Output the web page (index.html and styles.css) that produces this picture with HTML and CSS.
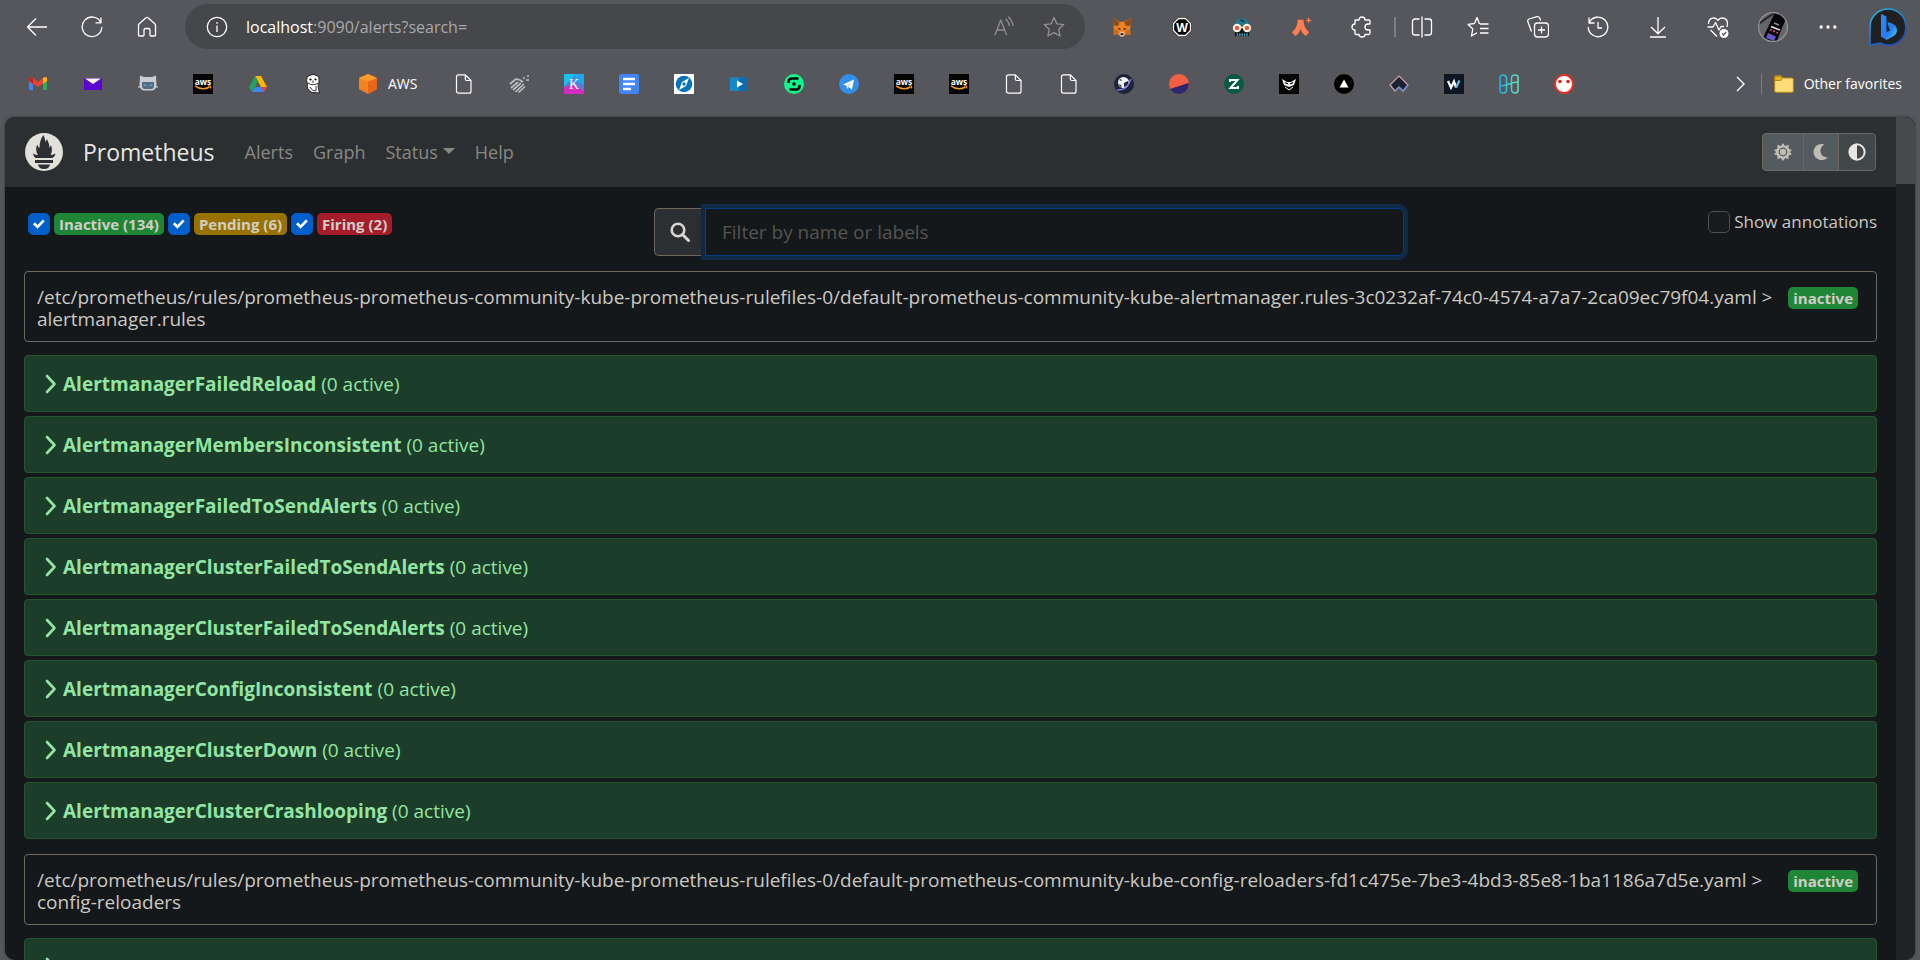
FILE: index.html
```html
<!DOCTYPE html>
<html lang="en">
<head>
<meta charset="utf-8">
<title>Prometheus Time Series Collection and Processing Server</title>
<meta name="viewport" content="width=device-width, initial-scale=1">
<link rel="stylesheet" href="styles.css">
</head>
<body>
<svg class="defs" aria-hidden="true">
  <symbol id="file" viewBox="0 0 20 20"><path d="M4.500 .8H11.300L17 6.500V17.200Q17 19.200 15 19.200H4.500Q2.500 19.200 2.500 17.200V2.800Q2.500 .8 4.500 .8Z M11.300 .8V5Q11.300 6.500 12.800 6.500H17" fill="none" stroke="#fff" stroke-width="1.200"/></symbol>
  <symbol id="aws" viewBox="0 0 20 20"><rect width="20" height="20" fill="#050505"/><text x="10" y="10.500" text-anchor="middle" font-family="Open Sans, sans-serif" font-weight="700" font-size="8.500" fill="#fff">aws</text><path d="M2 11.800Q9 17 16.500 13" fill="none" stroke="#f79a1f" stroke-width="1.500"/><path d="M15 12Q18.500 11 17.500 14.500" fill="none" stroke="#f79a1f" stroke-width="1.200"/></symbol>
  <symbol id="chevron" viewBox="0 0 12 20"><path d="M2 2 9.500 10 2 18" fill="none" stroke="currentColor" stroke-width="2.600" stroke-linecap="round" stroke-linejoin="round"/></symbol>
</svg>

<header class="browser">
  <div class="toolbar">
    <button class="tool tool-nav" aria-label="Back"><svg viewBox="0 0 22 22"><path d="M21 11H1.500M10 2.500 1.500 11 10 19.500"/></svg></button>
    <button class="tool tool-nav" aria-label="Refresh"><svg viewBox="0 0 22 22"><path d="M19.800 6.500A9.800 9.800 0 1 0 20.800 11M20 1.500V6.800H14.500"/></svg></button>
    <button class="tool tool-nav" aria-label="Home"><svg viewBox="0 0 22 22"><path d="M2.500 9.500Q2.500 8.500 3.200 7.800L10 1.800Q11 1 12 1.800L18.800 7.800Q19.500 8.500 19.500 9.500V19Q19.500 20 18.500 20H15Q14 20 14 19V14Q14 12.500 12.500 12.500H9.500Q8 12.500 8 14V19Q8 20 7 20H3.500Q2.500 20 2.500 19Z"/></svg></button>
    <div class="address">
      <svg class="address-info" viewBox="0 0 22 22"><circle cx="11" cy="11" r="9.700"/><path d="M11 9.500V16M11 6V7.800"/></svg>
      <span class="url"><b>localhost</b>:9090/alerts?search=</span>
      <button class="address-btn" aria-label="Read aloud"><svg viewBox="0 0 22 22"><path d="M2 19 7.800 4 13.600 19M4 14H11.600M12.500 3Q15.800 5.500 16.500 10M15 .8Q19.300 4 20 10"/></svg></button>
      <button class="address-btn" aria-label="Add to favorites"><svg viewBox="0 0 22 22"><path d="M11 1.500 13.800 7.800 20.800 8.600 15.700 13.300 17.100 20 11 16.600 4.900 20 6.300 13.300 1.200 8.600 8.200 7.800Z"/></svg></button>
    </div>
    <button class="tool tool-ext" aria-label="MetaMask"><svg class="art" viewBox="1 0 20 21"><path d="M1.500 1 8.500 5H13.500L20.500 1 20 9 19 16 20 18.500 15 18 12.500 20.500H9.500L7 18 2 18.500 3 16 2 9Z" fill="#ef821f"/><path d="M1.500 1 8.500 5.500 7 9.500 2 9ZM20.500 1 13.500 5.500 15 9.500 20 9Z" fill="#8d4b1d"/><path d="M2 14 7 13.500 7 18 2 19ZM20 14 15 13.500 15 18 20 19Z" fill="#c96b20"/><path d="M6 12 9 11.500 9.500 14ZM16 12 13 11.500 12.500 14Z" fill="#3b2b24"/><path d="M8 18 9.500 15.500H12.500L14 18 12.500 20.500H9.500Z" fill="#ddc7b4"/><path d="M9.500 17H12.500V19H9.500Z" fill="#211d1c"/></svg></button>
    <button class="tool tool-ext" aria-label="Wallet"><svg class="art" viewBox="1 1 20 20"><path d="M7 1.500H15L20.500 7V15L15 20.500H7L1.500 15V7Z" fill="#070707"/><path d="M7.500 2.500H14.500L19.500 7.500V14.500L14.500 19.500H7.500L2.500 14.500V7.500Z" fill="none" stroke="#fff"/><text x="11" y="15.500" text-anchor="middle" class="letter letter-w">W</text></svg></button>
    <button class="tool tool-ext" aria-label="Robot"><svg class="art" viewBox="1 0 20 21"><path d="M3 10Q3 1 11 1T19 10V12H3Z" fill="#287489"/><path d="M3.500 11H18.500V20H3.500Z" fill="#0e181d"/><circle cx="5.800" cy="11.500" r="3.400" fill="#e95a43" stroke="#fff4dd" stroke-width="2"/><circle cx="16.200" cy="11.500" r="3.400" fill="#e95a43" stroke="#fff4dd" stroke-width="2"/><path d="M9 11H13" stroke="#fff4dd" stroke-width="1.500"/><path d="M5.500 18.500H17" stroke="#56a9bc" stroke-width="2.500" stroke-dasharray="1.500 1"/><path d="M9 3 14 5" stroke="#123b48" stroke-width="1.500"/></svg></button>
    <button class="tool tool-ext" aria-label="Argent"><svg class="art" viewBox="1 0 21 21"><path d="M7 3H13Q13 11 19 16L15.500 20Q11 17 10 12Q9 17 4.500 20L1 16Q7 11 7 3Z" fill="#ff7d4e"/><path d="M18.500 0 19.400 2.600 22 3.500 19.400 4.400 18.500 7 17.600 4.400 15 3.500 17.600 2.600Z" fill="#ff7d4e"/></svg></button>
    <button class="tool tool-ext" aria-label="Extensions"><svg viewBox="0 0 22 22"><path d="M4 4H8Q8 1 11 1T14 4H18Q19 4 19 5V8H17Q14 8 14 11T17 14H19V17Q19 18.500 17.500 18.500H14Q14 21 11 21T8 18.500H5Q4 18.500 4 17.500V14Q1 14 1 11T4 8Z"/></svg></button>
    <span class="divider"></span>
    <button class="tool tool-split" aria-label="Split screen"><svg viewBox="0 0 22 22"><path d="M8.500 3H4Q1.500 3 1.500 5.500V16.500Q1.500 19 4 19H8.500M13.500 3H18Q20.500 3 20.500 5.500V16.500Q20.500 19 18 19H13.500M11 .5V21.500"/></svg></button>
    <button class="tool" aria-label="Favorites"><svg viewBox="0 0 22 22"><path d="M12.500 8 10 1.500 7.400 7.500 1 8.300 5.800 13 4.500 20 10 16.800M13 8H21.500M13 12.500H21.500M13 17H21.500"/></svg></button>
    <button class="tool" aria-label="Collections"><svg viewBox="0 0 22 22"><rect x="7.500" y="7" width="14" height="14" rx="3"/><path d="M14.500 10.500V17.500M11 14H18M4.500 15.500 .8 5.500Q.3 3.800 2 3L10 .7Q12 .5 12.800 2L13.600 4.500"/></svg></button>
    <button class="tool" aria-label="History"><svg viewBox="0 0 22 22"><path d="M2 7A9.800 9.800 0 1 1 1.200 11M2 1.500V7H7.500M11 6V12H15"/></svg></button>
    <button class="tool" aria-label="Downloads"><svg viewBox="0 0 22 22"><path d="M11 1V17.500M4 11 11 17.800 18 11M3 21H19"/></svg></button>
    <button class="tool" aria-label="Browser essentials"><svg viewBox="0 0 22 22"><path d="M1.500 8Q1.500 2 7 2Q9.500 2 11 4.500Q12.500 2 15 2Q20.500 2 20.500 8L20 11M.5 11H6L8.500 6.500 12 14 14 10.500H17M3.500 14 10 20.500"/><circle cx="17" cy="17.500" r="4.500" fill="#fff" stroke="none"/><path d="m15 17.500 1.500 1.500 2.700-3" stroke="#55565b"/></svg></button>
    <button class="tool tool-avatar" aria-label="Profile"><svg class="avatar" viewBox="0 0 30 30"><defs><clipPath id="round"><circle cx="15" cy="15" r="15"/></clipPath></defs><g clip-path="url(#round)"><rect width="30" height="30" fill="#66666a"/><path d="M-1 13 16 1" stroke="#242427" stroke-width="2"/><path d="M17 0 29 4 18 31 5 26Z" fill="#060609"/><path d="M16 11 21 13" stroke="#8a8a92" stroke-width="1.500"/><path d="M13 14.500 22 18" stroke="#f2e4ee" stroke-width="1.500"/><path d="M12 17.500 20 21" stroke="#e0457c" stroke-width="1.800" stroke-dasharray="2 1.500"/><path d="M10 21 18 24.500 16 29 8 26Z" fill="#6657c9"/></g><circle cx="15" cy="15" r="14.500" fill="none" stroke="#939396"/></svg></button>
    <button class="tool" aria-label="Settings and more"><svg viewBox="0 0 22 22"><g fill="#fff" stroke="none"><circle cx="4.200" cy="11" r="1.700"/><circle cx="11" cy="11" r="1.700"/><circle cx="17.800" cy="11" r="1.700"/></g></svg></button>
    <button class="tool" aria-label="Bing"><svg class="bing" viewBox="0 0 40 40"><defs><linearGradient id="ring" x2="0.600" y2="1"><stop stop-color="#25c5ee"/><stop offset="1" stop-color="#1747c8"/></linearGradient><linearGradient id="bee" x1="0" y1="0" x2="1" y2="1"><stop stop-color="#2d8df5"/><stop offset=".6" stop-color="#267af0"/><stop offset="1" stop-color="#48dde2"/></linearGradient></defs><path d="M2 38V20A18 18 0 1 1 20 38Q16 38 12 36Z" fill="#202023" stroke="url(#ring)" stroke-width="1.600"/><path d="M13 7 18.500 9.500V25L22 23.500 20 18 19.500 15Q29 17 29 23Q29 27 25 29.500L18.500 33 13 29.500Z" fill="url(#bee)"/></svg></button>
  </div>

  <nav class="bookmarks" aria-label="Favorites bar">
    <a href="#" aria-label="Gmail"><svg viewBox="0 0 20 20"><path d="M1 4H5V16H2Q1 16 1 15Z" fill="#4285f4"/><path d="M15 4H19V15Q19 16 18 16H15Z" fill="#34a853"/><path d="M1 5Q1 2 4 3L10 8 16 3Q19 2 19 5V7L10 13 1 7Z" fill="#ea4335"/><path d="M15 4 17 3Q19 3 19 5V7L15 10Z" fill="#fbbc04"/><path d="M1 5Q1 3 3 3L5 4V10L1 7Z" fill="#c5221f"/></svg></a>
    <a href="#" aria-label="Mail"><svg viewBox="0 0 20 20"><path d="M1 4H19V16H1Z" fill="#5b06d2"/><path d="M2 4.500H18L10 10Z" fill="#fff"/></svg></a>
    <a href="#" aria-label="Cat"><svg viewBox="0 0 20 20"><path d="M2 1.500 6 3H14L18 1.500 18.500 12Q17 16.500 14 16.500H6Q3 16.500 1.500 12Z" fill="#c9ccd4"/><path d="M4 8H16V12Q16 15 13 15H7Q4 15 4 12Z" fill="#566a80"/><path d="M6 12Q7.200 9.500 8.400 12M11.600 12Q12.800 9.500 14 12" fill="none" stroke="#4cb6e6" stroke-width="1.200"/><path d="M0 13H3M17 13H20" stroke="#dadbe0"/></svg></a>
    <a href="#" aria-label="AWS console"><svg><use href="#aws"/></svg></a>
    <a href="#" aria-label="Drive"><svg viewBox="0 0 20 20"><path d="M7 2H13L19 13H13Z" fill="#fbb904"/><path d="M7 2 10 7 4 18 1 13Z" fill="#22a45d"/><path d="M4 18 7 13H19L16 18Z" fill="#4285f4"/><path d="M13 13H19L16 18Z" fill="#ea4335"/></svg></a>
    <a href="#" aria-label="Owl"><svg viewBox="0 0 20 20"><path d="M4 3Q10-2 16 3L16 9Q14 11 16.500 19L9 18.500Q3 15 4.500 10Q3 7 4 3Z" fill="#fff" stroke="#202124"/><circle cx="7.500" cy="5.500" r="1.100"/><circle cx="12.500" cy="5.500" r="1.100"/><path d="M10 6.500V9M5 9Q10 12.500 15.500 9M7 13Q9 17.500 13 17V12" fill="none" stroke="#333"/></svg></a>
    <a class="named" href="#"><svg viewBox="0 0 20 20"><path d="M10 0 19 4V15L10 20 1 15V4Z" fill="#f58220"/><path d="M10 0 19 4 10 8 1 4Z" fill="#fa9b2b"/><path d="M10 8 19 4V15L10 20Z" fill="#e8651a"/></svg><span>AWS</span></a>
    <a href="#" aria-label="Page"><svg><use href="#file"/></svg></a>
    <a href="#" aria-label="Handshake"><svg viewBox="0 0 20 20"><path d="M1 10 7 5 11 6 14 8M2 14 9 8M4 16 12 9M6.500 18 15 10M9.500 18.500 16 12.500" fill="none" stroke="#b9c0bf" stroke-width="1.700"/><path d="M14 4H16M18 2H20M17 6H20" stroke="#b9c0bf" stroke-width="1.500"/></svg></a>
    <a href="#" aria-label="K"><svg viewBox="0 0 20 20"><path d="M0 0H20V20H0Z" fill="#5c78d8"/><path d="M0 0H12L0 13Z" fill="#13c2ef"/><path d="M12 0H20V11L10 7Z" fill="#1ea7ea"/><path d="M0 13 10 11 20 17V20H0Z" fill="#d72bc0"/><text x="10" y="15" text-anchor="middle" class="letter letter-k">K</text></svg></a>
    <a href="#" aria-label="Docs"><svg viewBox="0 0 20 20"><rect width="20" height="20" rx="2" fill="#4285f4"/><path d="M4 5H16M4 10H16M4 15H12" stroke="#fff" stroke-width="2.300"/></svg></a>
    <a href="#" aria-label="Compass"><svg viewBox="0 0 20 20"><path d="M0 0H20V20H0Z" fill="#fff"/><circle cx="10" cy="10" r="8.300" fill="#0873b9"/><path d="M15 4 12 12 5 16 8 8Z" fill="#fff"/><circle cx="10" cy="10" r="1.700" fill="#0873b9"/></svg></a>
    <a href="#" aria-label="Video"><svg viewBox="0 0 20 20"><path d="M1 3.500H19V17H1Z" fill="#1689c4"/><path d="M10 3.500H19V17H10Z" fill="#106bac"/><path d="M8 6.500 14 10 8 13.500Z" fill="#fff"/></svg></a>
    <a href="#" aria-label="Green S"><svg viewBox="0 0 20 20"><circle cx="10" cy="10" r="10" fill="#10f58b"/><path d="M14.500 4.500H8Q4.500 4.500 4.500 8V9M5.500 15.500H12Q15.500 15.500 15.500 12V11" fill="none" stroke="#05080b" stroke-width="2.600"/><circle cx="10" cy="10" r="1.800" fill="#05080b"/></svg></a>
    <a href="#" aria-label="Telegram"><svg viewBox="0 0 20 20"><circle cx="10" cy="10" r="10" fill="#328fea"/><path d="M4 10.500 15 5.500 13 15.500 9.500 13 8 15 7.500 11.800Z" fill="#fff"/><path d="m8 12 5-4-4 5Z" fill="#a6c9ec"/></svg></a>
    <a href="#" aria-label="AWS docs"><svg><use href="#aws"/></svg></a>
    <a href="#" aria-label="AWS training"><svg><use href="#aws"/></svg></a>
    <a href="#" aria-label="Page"><svg><use href="#file"/></svg></a>
    <a href="#" aria-label="Page"><svg><use href="#file"/></svg></a>
    <a href="#" aria-label="Globe"><svg viewBox="0 0 20 20"><circle cx="10" cy="10" r="10" fill="#1b2538"/><circle cx="9.500" cy="8.500" r="5.500" fill="#f2f5fa"/><path d="M5 6 7 5 8 7ZM10 9 14 7 15 11 10 13ZM4 10 7 11 8 14Z" fill="#1b2538"/><path d="M3 16Q13 17 17 5" fill="none" stroke="#8379e8" stroke-width="1.500"/></svg></a>
    <a href="#" aria-label="Two-tone circle"><svg viewBox="0 0 20 20"><circle cx="10" cy="10" r="10" fill="#f35f43"/><path d="M1 15 19.500 9Q20.500 13 17 17Q13.500 20.500 9 20Q4 19.500 1 15Z" fill="#2d2770"/></svg></a>
    <a href="#" aria-label="Z"><svg viewBox="0 0 20 20"><circle cx="10" cy="10" r="10" fill="#075b43"/><path d="M6 6H13.500L6.500 14H14M6 5V8M14 12V15" fill="none" stroke="#fff" stroke-width="2"/></svg></a>
    <a href="#" aria-label="Owl mask"><svg viewBox="0 0 20 20"><path d="M0 0H20V20H0Z" fill="#050505"/><path d="M3 5 8 8H12L17 5 15 11 10 13 5 11Z" fill="#fff"/><path d="M6 8.500 9 10M14 8.500 11 10" stroke="#050505" stroke-width="1.300"/><path d="M6 13 10 16 14 13" fill="none" stroke="#fff"/></svg></a>
    <a href="#" aria-label="Triangle"><svg viewBox="0 0 20 20"><circle cx="10" cy="10" r="10"/><path d="M10 5.500 14.500 13.500H5.500Z" fill="#fff"/></svg></a>
    <a href="#" aria-label="Arrow"><svg viewBox="0 0 20 20"><path d="M10 2 19 11 14 17 10 13 6 17 1 11Z" fill="#1d2233" stroke="#c5a7a0" stroke-width="1.200"/><path d="M19 11 14 17 10 13 6 17" fill="none" stroke="#6f8fd4" stroke-width="1.200"/></svg></a>
    <a href="#" aria-label="W"><svg viewBox="0 0 20 20"><path d="M0 0H20V20H0Z" fill="#0e1624"/><path d="M4 7 7 13.500 10 7.500 12 13.500" fill="none" stroke="#fff" stroke-width="2.300"/><path d="M12 13.500 15.500 6.500" stroke="#69b8e8" stroke-width="2.300"/></svg></a>
    <a href="#" aria-label="Harmony"><svg viewBox="0 0 20 20"><defs><linearGradient id="harm" x2="1"><stop stop-color="#1bb4e8"/><stop offset="1" stop-color="#5fe5b5"/></linearGradient></defs><path d="M1 4Q1 1 4 1T7.500 4V16Q7.500 19 4 19T1 16ZM12.500 4Q12.500 1 16 1T19 4V16Q19 19 16 19T12.500 16ZM1 12Q5 12 10 10T19 8" fill="none" stroke="url(#harm)" stroke-width="1.500"/></svg></a>
    <a href="#" aria-label="Face"><svg viewBox="0 0 20 20"><circle cx="10" cy="10" r="9" fill="#fff" stroke="#f02e1c" stroke-width="2"/><circle cx="6" cy="7.500" r="1.800" fill="#e91d14"/><circle cx="14" cy="7.500" r="1.800" fill="#e91d14"/></svg></a>
    <button class="more" aria-label="More favorites"><svg viewBox="0 0 20 20"><path d="M7 3 14 10 7 17" fill="none" stroke="#fff" stroke-width="1.400"/></svg></button>
    <span class="divider"></span>
    <a class="other" href="#"><svg viewBox="0 0 20 20"><path d="M.7 3Q.7 1.700 2 1.700H7L9 4H18Q19.300 4 19.300 5.300V17Q19.300 18.300 18 18.300H2Q.7 18.300 .7 17Z" fill="#ffdc79" stroke="#b98a10"/><path d="M1 2.500H7L8 4.500 7 6.500H1Z" fill="#e9b51f" stroke="#b98a10"/></svg><span>Other favorites</span></a>
  </nav>
</header>

<div class="viewport">
  <div class="page">
    <nav class="navbar">
      <svg class="logo" viewBox="0 0 38 38"><circle cx="19" cy="19" r="19" fill="#e3dfd9"/><path d="M8 20.500Q11 22 13 22Q10 18 12 11.500Q13 14 14.500 15Q14.500 7 18.500 2Q20 5 20.500 9L22 6Q24.500 11 24.500 15L26 12Q28 18 25.500 22Q27 22 30.500 20.500Q30 24 27.500 25H10.500Q8.500 24 8 20.500Z" fill="#2b2f32"/><path d="M10 27H28V30H10ZM13 31.500H25Q24 36 19 36T13 31.500Z" fill="#2b2f32"/></svg>
      <a class="brand" href="#">Prometheus</a>
      <a class="nav-link" href="#">Alerts</a>
      <a class="nav-link" href="#">Graph</a>
      <a class="nav-link caret" href="#">Status</a>
      <a class="nav-link" href="#">Help</a>
      <div class="themes" role="group" aria-label="Theme">
        <button aria-label="Light theme"><svg viewBox="0 0 20 20"><path d="M10 0 12.200 3.200 16.200 2 16.200 6.200 20 8 17.500 10 20 12.500 16.200 13.800 16.200 18 12.500 16.800 10 20 7.500 16.800 3.800 18 3.800 13.800 0 12.500 2.500 10 0 8 3.800 6.200 3.800 2 7.800 3.200Z" fill="currentColor"/><circle cx="10" cy="10" r="4.200" fill="none" stroke="#545b5f" stroke-width="1.400"/></svg></button>
        <button aria-label="Dark theme"><svg viewBox="0 0 20 20"><path d="M13.500 1.500A9 9 0 1 0 17.500 16Q10.500 16 9.500 10Q9 5 13.500 1.500Z" fill="currentColor"/></svg></button>
        <button class="active" aria-label="Browser theme"><svg viewBox="0 0 20 20"><circle cx="10" cy="10" r="8.500" fill="none" stroke="currentColor" stroke-width="2.200"/><path d="M10 1.500V18.500A8.500 8.500 0 0 1 10 1.500Z" fill="currentColor"/></svg></button>
      </div>
    </nav>

    <main class="content">
      <form class="filters">
        <div class="states">
          <label><input type="checkbox" checked><span class="badge inactive">Inactive (134)</span></label>
          <label><input type="checkbox" checked><span class="badge pending">Pending (6)</span></label>
          <label><input type="checkbox" checked><span class="badge firing">Firing (2)</span></label>
        </div>
        <div class="search">
          <span class="search-icon"><svg viewBox="0 0 20 20"><circle cx="8" cy="8" r="6.300" fill="none" stroke="currentColor" stroke-width="2.600"/><path d="M12.500 12.500 18.500 18.500" stroke="currentColor" stroke-width="3" stroke-linecap="round"/></svg></span>
          <input type="text" aria-label="Filter by name or labels" placeholder="Filter by name or labels">
        </div>
        <label class="annotations"><input type="checkbox"><span>Show annotations</span></label>
      </form>

      <section class="group">
        <div class="rule-file"><span class="path">/etc/prometheus/rules/prometheus-prometheus-community-kube-prometheus-rulefiles-0/default-prometheus-community-kube-alertmanager.rules-3c0232af-74c0-4574-a7a7-2ca09ec79f04.yaml &gt; alertmanager.rules</span><span class="badge inactive">inactive</span></div>
        <button class="alert"><svg><use href="#chevron"/></svg><span><strong>AlertmanagerFailedReload</strong> (0 active)</span></button>
        <button class="alert"><svg><use href="#chevron"/></svg><span><strong>AlertmanagerMembersInconsistent</strong> (0 active)</span></button>
        <button class="alert"><svg><use href="#chevron"/></svg><span><strong>AlertmanagerFailedToSendAlerts</strong> (0 active)</span></button>
        <button class="alert"><svg><use href="#chevron"/></svg><span><strong>AlertmanagerClusterFailedToSendAlerts</strong> (0 active)</span></button>
        <button class="alert"><svg><use href="#chevron"/></svg><span><strong>AlertmanagerClusterFailedToSendAlerts</strong> (0 active)</span></button>
        <button class="alert"><svg><use href="#chevron"/></svg><span><strong>AlertmanagerConfigInconsistent</strong> (0 active)</span></button>
        <button class="alert"><svg><use href="#chevron"/></svg><span><strong>AlertmanagerClusterDown</strong> (0 active)</span></button>
        <button class="alert"><svg><use href="#chevron"/></svg><span><strong>AlertmanagerClusterCrashlooping</strong> (0 active)</span></button>
      </section>
      <section class="group">
        <div class="rule-file"><span class="path">/etc/prometheus/rules/prometheus-prometheus-community-kube-prometheus-rulefiles-0/default-prometheus-community-kube-config-reloaders-fd1c475e-7be3-4bd3-85e8-1ba1186a7d5e.yaml &gt; config-reloaders</span><span class="badge inactive">inactive</span></div>
        <button class="alert" aria-label="Expand alert"><svg><use href="#chevron"/></svg></button>
      </section>
    </main>
  </div>
  <div class="scrollbar"><div class="thumb"></div></div>
</div>
</body>
</html>
```

FILE: styles.css
```css
* { box-sizing: border-box; }

body {
  margin: 0;
  height: 100vh;
  display: flex;
  flex-direction: column;
  overflow: hidden;
  background: #56575c;
  color: #cbc8c2;
  font-family: "Open Sans", "Noto Sans", sans-serif;
  font-size: 19px;
}

button, input { font: inherit; color: inherit; }
button { border: 0; padding: 0; background: none; }
a { color: inherit; text-decoration: none; }
svg { display: block; flex: none; }
.defs { display: none; }

/* Browser toolbar */
.browser { flex: none; color: #fff; }

.toolbar {
  display: flex;
  align-items: center;
  height: 53px;
  padding: 0 2px 0 9px;
}

.tool {
  width: 60px;
  height: 44px;
  display: flex;
  align-items: center;
  justify-content: center;
  flex: none;
}

.tool svg, .address svg {
  width: 22px;
  height: 22px;
  fill: none;
  stroke: #fff;
  stroke-width: 1.3;
  stroke-linejoin: round;
}
.tool .art { width: 20px; height: 20px; stroke: none; }
.tool .avatar { width: 30px; height: 30px; stroke: none; }
.tool .bing { width: 40px; height: 40px; stroke: none; }
.tool-nav { width: 55px; }
.tool-split { width: 52px; }
.tool-avatar { width: 50px; }

.letter { fill: #fff; text-anchor: middle; }
.letter-w { font-family: "Open Sans", sans-serif; font-size: 12px; font-weight: 700; }
.letter-k { font-family: "Liberation Serif", serif; font-size: 14px; }

.address {
  flex: 1;
  min-width: 0;
  height: 45px;
  margin: 0 7px 0 11px;
  padding: 0 20px 0 21px;
  border-radius: 23px;
  display: flex;
  align-items: center;
  background: #46474a;
}
.address-info { margin-right: 18px; }
.url { flex: 1; font-size: 16px; color: #a9a9ab; }
.url b { font-weight: 400; color: #fff; }
.address-btn { margin-left: 28px; }
.address .address-btn svg { stroke: #919194; }

.divider { width: 2px; height: 20px; flex: none; background: #7d7e82; }
.toolbar .divider { margin-left: 2px; }

.bookmarks {
  display: flex;
  align-items: center;
  gap: 35px;
  height: 64px;
  padding: 0 18px 3px 28px;
  font-size: 14px;
}
.bookmarks a { display: flex; align-items: center; gap: 10px; white-space: nowrap; }
.bookmarks svg { width: 20px; height: 20px; }
.bookmarks .named { padding-right: 2px; }
.bookmarks .more { margin-left: auto; }
.bookmarks .divider { width: 1px; margin: 0 -23px 0 -24px; }

/* Page window */
.viewport {
  flex: 1;
  min-height: 0;
  margin: 0 5px;
  display: flex;
  border-radius: 10px;
  overflow: hidden;
  background: #14181b;
  box-shadow: 0 0 3px #333;
}
.page { flex: 1; min-width: 0; overflow: hidden; }
.scrollbar { width: 19px; background: #202324; }
.thumb { height: 67px; background: #454a4d; }

.navbar {
  display: flex;
  align-items: center;
  height: 70px;
  padding: 0 20px;
  background: #2b2f32;
}
.logo { width: 38px; height: 38px; margin-right: 20px; }
.brand { margin-right: 20px; font-size: 23px; color: #e8e6e3; }
.nav-link { padding: 0 10px; font-size: 18px; color: #8a8882; }
.caret::after {
  content: "";
  display: inline-block;
  margin-left: 5px;
  vertical-align: 5px;
  border: 6px solid transparent;
  border-top-color: currentColor;
  border-bottom: 0;
}

.themes {
  display: flex;
  margin-left: auto;
  height: 38px;
  border: 1px solid #6f675d;
  border-radius: 4px;
  overflow: hidden;
  color: #c2bdb4;
  background: #545b5f;
}
.themes button { padding: 0 11px; }
.themes button + button { padding: 0 8px; border-left: 1px solid #6f675d; }
.themes button.active { padding: 0 9px; background: #42474a; color: #e8e6e3; }
.themes svg { width: 18px; height: 18px; }

.content { padding: 21px 19px 0; }

.filters {
  display: grid;
  grid-template-columns: 630fr 750fr 473fr;
  align-items: start;
  height: 63px;
}
.states { display: flex; gap: 4px; padding: 5px 4px; }
.states label { display: flex; align-items: center; gap: 4px; }

input[type="checkbox"] {
  appearance: none;
  flex: none;
  width: 22px;
  height: 22px;
  margin: 0;
  border: 1px solid #4c5052;
  border-radius: 5px;
  background: #181a1b;
}
input[type="checkbox"]:checked {
  display: grid;
  place-items: center;
  border-color: #0058bc;
  background: #005fcb;
}
input[type="checkbox"]:checked::before {
  content: "";
  width: 12px;
  height: 12px;
  background: #fff;
  clip-path: polygon(0 52%, 16% 36%, 38% 58%, 82% 12%, 98% 28%, 38% 90%);
}

.badge {
  flex: none;
  padding: 0 5px;
  border-radius: 5px;
  font-size: 15px;
  line-height: 22px;
  font-weight: 700;
  color: #d1cec8;
}
.inactive { background: #208637; }
.pending { background: #977200; }
.firing { background: #a51d2a; }

.search { display: flex; height: 48px; }
.search-icon {
  width: 51px;
  display: grid;
  place-items: center;
  flex: none;
  border: 1px solid #6f675d;
  border-right: 0;
  border-radius: 5px 0 0 5px;
  background: #2b2f32;
  color: #d8d4ce;
}
.search-icon svg { width: 20px; height: 20px; }
.search input {
  flex: 1;
  min-width: 0;
  padding: 0 16px;
  border: 1px solid #003f86;
  border-radius: 0 5px 5px 0;
  outline: 0;
  background: #14181b;
  box-shadow: 0 0 0 4px #0f2a47;
}
.search input::placeholder { color: #55544f; opacity: 1; }

.annotations { display: flex; gap: 4px; align-items: center; justify-self: end; font-size: 17px; line-height: 28px; }

/* Rule groups */
.group { margin-bottom: 15px; }
.rule-file {
  display: flex;
  align-items: flex-start;
  min-height: 71px;
  margin-bottom: 13px;
  padding: 14px 18px 10px 12px;
  border: 1px solid #6f675d;
  border-radius: 4px;
}
.path { flex: 1; min-width: 0; line-height: 22px; }
.rule-file .badge { margin-top: 1px; }
.alert {
  display: flex;
  align-items: center;
  gap: 6px;
  width: 100%;
  height: 57px;
  margin-bottom: 4px;
  padding: 0 20px;
  border: 1px solid #23562f;
  border-radius: 4px;
  background: #1c3d29;
  color: #93e5a4;
  text-align: left;
}
.alert svg { width: 12px; height: 20px; }
```
